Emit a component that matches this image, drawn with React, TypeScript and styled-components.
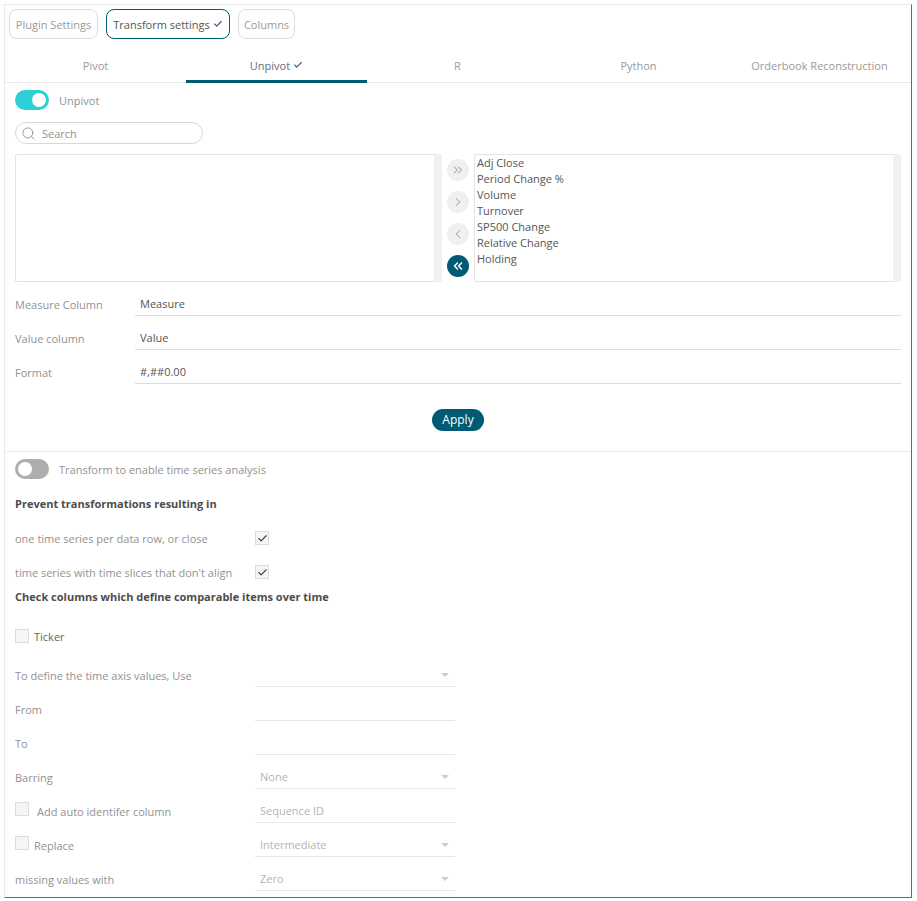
import React from "react"
import styled, { createGlobalStyle } from "styled-components"
import { ChevronLeft, ChevronRight, ChevronsLeft, ChevronsRight, Check, Search } from "lucide-react"

const GlobalStyle = createGlobalStyle`
    html, body {
        margin: 0;
        padding: 0;
        background: #ffffff;
    }

    body {
        font-family: "Open Sans", "Liberation Sans", sans-serif;
        font-size: 11px;
        color: #929292;
    }
`

const measures = ["Adj Close", "Period Change %", "Volume", "Turnover", "SP500 Change", "Relative Change", "Holding"]

const ArrowIcons = [
    { icon: ChevronsRight, active: false },
    { icon: ChevronRight, active: false },
    { icon: ChevronLeft, active: false },
    { icon: ChevronsLeft, active: true },
]

const Caret = () => (
    <CaretIcon viewBox="0 0 8 4">
        <path d="M0 0h8L4 4z" fill="#cccccc" />
    </CaretIcon>
)

export default function App() {
    return (
        <Page>
            <GlobalStyle />
            <Frame>
                <TopButtons>
                    <PillTab $width={89}>Plugin Settings</PillTab>
                    <PillTab $width={124} $active>
                        Transform settings
                        <Check size={10} strokeWidth={2.6} color="#3f5a66" />
                    </PillTab>
                    <PillTab $width={57}>Columns</PillTab>
                </TopButtons>

                <Tabs>
                    <Tab>Pivot</Tab>
                    <Tab $active>
                        Unpivot
                        <Check size={10} strokeWidth={2.6} color="#3f5a66" />
                    </Tab>
                    <Tab>R</Tab>
                    <Tab>Python</Tab>
                    <Tab>Orderbook Reconstruction</Tab>
                </Tabs>

                <UnpivotSection>
                    <ToggleRow>
                        <Toggle $on />
                        <span>Unpivot</span>
                    </ToggleRow>

                    <SearchBox>
                        <Search size={15} strokeWidth={1.3} color="#8a8a8a" />
                        <span>Search</span>
                    </SearchBox>

                    <Picker>
                        <ListBox />
                        <ArrowColumn>
                            {ArrowIcons.map(({ icon: Icon, active }, i) => (
                                <ArrowButton key={i} $active={active}>
                                    <Icon size={14} strokeWidth={active ? 2.6 : 1.8} />
                                </ArrowButton>
                            ))}
                        </ArrowColumn>
                        <ListBox>
                            {measures.map((m) => (
                                <ListItem key={m}>{m}</ListItem>
                            ))}
                        </ListBox>
                    </Picker>

                    <FieldRow>
                        <span>Measure Column</span>
                        <TextField>Measure</TextField>
                    </FieldRow>
                    <FieldRow>
                        <span>Value column</span>
                        <TextField>Value</TextField>
                    </FieldRow>
                    <FieldRow>
                        <span>Format</span>
                        <TextField>#,##0.00</TextField>
                    </FieldRow>

                    <ApplyRow>
                        <ApplyButton>Apply</ApplyButton>
                    </ApplyRow>
                </UnpivotSection>

                <TimeSection>
                    <ToggleRow>
                        <Toggle />
                        <span>Transform to enable time series analysis</span>
                    </ToggleRow>

                    <Heading>Prevent transformations resulting in</Heading>

                    <CheckRow>
                        <span>one time series per data row, or close</span>
                        <CheckBox>
                            <Check size={11} strokeWidth={2.4} color="#3c3c3c" />
                        </CheckBox>
                    </CheckRow>
                    <CheckRow>
                        <span>time series with time slices that don't align</span>
                        <CheckBox>
                            <Check size={11} strokeWidth={2.4} color="#3c3c3c" />
                        </CheckBox>
                    </CheckRow>

                    <TightHeading>Check columns which define comparable items over time</TightHeading>

                    <TickerRow>
                        <CheckBox />
                        <span>Ticker</span>
                    </TickerRow>

                    <FormRow>
                        <span>To define the time axis values, Use</span>
                        <SelectField>
                            <Caret />
                        </SelectField>
                    </FormRow>
                    <FormRow>
                        <span>From</span>
                        <SelectField />
                    </FormRow>
                    <FormRow>
                        <span>To</span>
                        <SelectField />
                    </FormRow>
                    <FormRow>
                        <span>Barring</span>
                        <SelectField>
                            None
                            <Caret />
                        </SelectField>
                    </FormRow>
                    <FormRow>
                        <CheckLabel $gap={8}>
                            <CheckBox />
                            <span>Add auto identifer column</span>
                        </CheckLabel>
                        <SelectField>Sequence ID</SelectField>
                    </FormRow>
                    <FormRow>
                        <CheckLabel $gap={5}>
                            <CheckBox />
                            <span>Replace</span>
                        </CheckLabel>
                        <SelectField>
                            Intermediate
                            <Caret />
                        </SelectField>
                    </FormRow>
                    <FormRow>
                        <span>missing values with</span>
                        <SelectField>
                            Zero
                            <Caret />
                        </SelectField>
                    </FormRow>
                </TimeSection>
            </Frame>
        </Page>
    )
}

const Page = styled.div`
    padding: 4px 5px 3px 4px;
    width: 917px;
    height: 901px;
    box-sizing: border-box;
`

const Frame = styled.div`
    height: 894px;
    box-sizing: border-box;
    overflow: hidden;

    border-top: 1px solid #e9e9e9;
    border-left: 1px solid #e9e9e9;
    border-right: 1px solid #6a6a6a;
    border-bottom: 1px solid #6a6a6a;
`

const TopButtons = styled.div`
    display: flex;
    gap: 8px;

    padding: 4px 4px 0;
`

const PillTab = styled.div<{ $active?: boolean; $width: number }>`
    display: flex;
    align-items: center;
    justify-content: center;
    gap: 3px;

    width: ${(p) => p.$width}px;
    height: 30px;
    box-sizing: border-box;

    border: 1px solid ${(p) => (p.$active ? "#005a73" : "#dcdcdc")};
    border-radius: 8px;

    color: ${(p) => (p.$active ? "#555555" : "#9a9a9a")};
`

const Tabs = styled.div`
    display: flex;

    height: 38px;
    margin-top: 5px;
    padding-right: 1px;

    border-bottom: 1px solid #e9e9e9;
    box-sizing: content-box;
`

const Tab = styled.div<{ $active?: boolean }>`
    flex: 1;
    display: flex;
    align-items: center;
    justify-content: center;
    gap: 3px;

    padding-top: 6px;
    box-sizing: border-box;
    margin-bottom: -1px;

    border-bottom: 3px solid ${(p) => (p.$active ? "#005a73" : "transparent")};

    color: ${(p) => (p.$active ? "#5f6f78" : "#9a9a9a")};
`

const UnpivotSection = styled.div`
    padding: 7px 10px 0;
    height: 369px;
    box-sizing: border-box;

    border-bottom: 1px solid #e9e9e9;
`

const ToggleRow = styled.div`
    display: flex;
    align-items: center;
    gap: 10px;

    height: 20px;
`

const Toggle = styled.div<{ $on?: boolean }>`
    position: relative;

    width: 34px;
    height: 20px;

    border-radius: 10px;
    background: ${(p) => (p.$on ? "#2ccfd3" : "#aeaeae")};

    &::after {
        content: "";
        position: absolute;
        top: 3px;
        left: ${(p) => (p.$on ? "17px" : "3px")};

        width: 14px;
        height: 14px;

        border-radius: 50%;
        background: #ffffff;
    }
`

const SearchBox = styled.div`
    display: flex;
    align-items: center;
    gap: 6px;

    width: 188px;
    height: 22px;
    margin-top: 12px;
    padding-left: 5px;
    box-sizing: border-box;

    border: 1px solid #d8d8d8;
    border-radius: 11px;
`

const Picker = styled.div`
    display: flex;
    margin-top: 10px;
`

const ListBox = styled.div`
    width: 427px;
    height: 128px;
    padding: 0 0 0 2px;
    box-sizing: border-box;

    border: 1px solid #e4e4e4;
    border-right: 8px solid #f1f1f1;
    border-radius: 2px;
`

const ListItem = styled.div`
    height: 16px;
    line-height: 16px;
    color: #555555;
`

const ArrowColumn = styled.div`
    display: flex;
    flex-direction: column;
    gap: 10px;

    padding: 5px 5px 0;
`

const ArrowButton = styled.div<{ $active?: boolean }>`
    display: flex;
    align-items: center;
    justify-content: center;

    width: 22px;
    height: 22px;

    border-radius: 50%;
    background: ${(p) => (p.$active ? "#005a73" : "#f0f0f0")};
    color: ${(p) => (p.$active ? "#ffffff" : "#a8a8a8")};
`

const FieldRow = styled.div`
    display: flex;
    align-items: flex-end;

    height: 34px;

    & > span {
        width: 120px;
        line-height: 17px;
        padding-bottom: 3px;
    }
`

const TextField = styled.div`
    flex: 1;

    height: 23px;
    line-height: 22px;
    padding-left: 5px;
    box-sizing: border-box;

    border-bottom: 1px solid #dcdcdc;
    color: #555555;
`

const ApplyRow = styled.div`
    display: flex;
    justify-content: center;
    margin-top: 25px;
`

const ApplyButton = styled.div`
    width: 52px;
    height: 22px;
    line-height: 22px;

    border-radius: 11px;
    background: #005a73;

    color: #ffffff;
    font-size: 12px;
    text-align: center;
`

const TimeSection = styled.div`
    padding: 7px 10px 0;
`

const Heading = styled.div`
    margin-top: 17px;

    line-height: 15px;
    font-weight: 700;
    color: #4c4c4c;
`

const TightHeading = styled(Heading)`
    margin-top: 0;
`

const CheckRow = styled.div`
    display: flex;
    align-items: center;

    height: 34px;

    & > span {
        width: 240px;
    }

    ${Heading} + & {
        margin-top: 10px;
    }
`

const CheckBox = styled.div`
    display: flex;
    align-items: center;
    justify-content: center;
    flex-shrink: 0;

    width: 14px;
    height: 14px;
    box-sizing: border-box;

    border: 1px solid #dcdcdc;
    background: #f5f5f5;
`

const TickerRow = styled.div`
    display: flex;
    align-items: center;
    gap: 5px;

    height: 14px;
    margin-top: 25px;
    margin-bottom: 10px;
    color: #666666;
`

const FormRow = styled.div`
    display: flex;
    align-items: flex-end;

    width: 440px;
    height: 34px;

    & > span {
        width: 240px;
        line-height: 15px;
        padding-bottom: 4px;
    }
`

const CheckLabel = styled.div<{ $gap: number }>`
    display: flex;
    gap: ${(p) => p.$gap}px;

    width: 240px;
    padding-bottom: 4px;
    align-items: flex-end;

    & > span {
        line-height: 15px;
    }

    & > div {
        margin-bottom: 3px;
    }
`

const SelectField = styled.div`
    position: relative;

    width: 200px;
    height: 23px;
    line-height: 22px;
    padding-left: 5px;
    box-sizing: border-box;

    border-bottom: 1px solid #e6e6e6;
    color: #b4b4b4;
`

const CaretIcon = styled.svg`
    position: absolute;
    top: 9px;
    right: 6px;

    width: 8px;
    height: 4px;
`
